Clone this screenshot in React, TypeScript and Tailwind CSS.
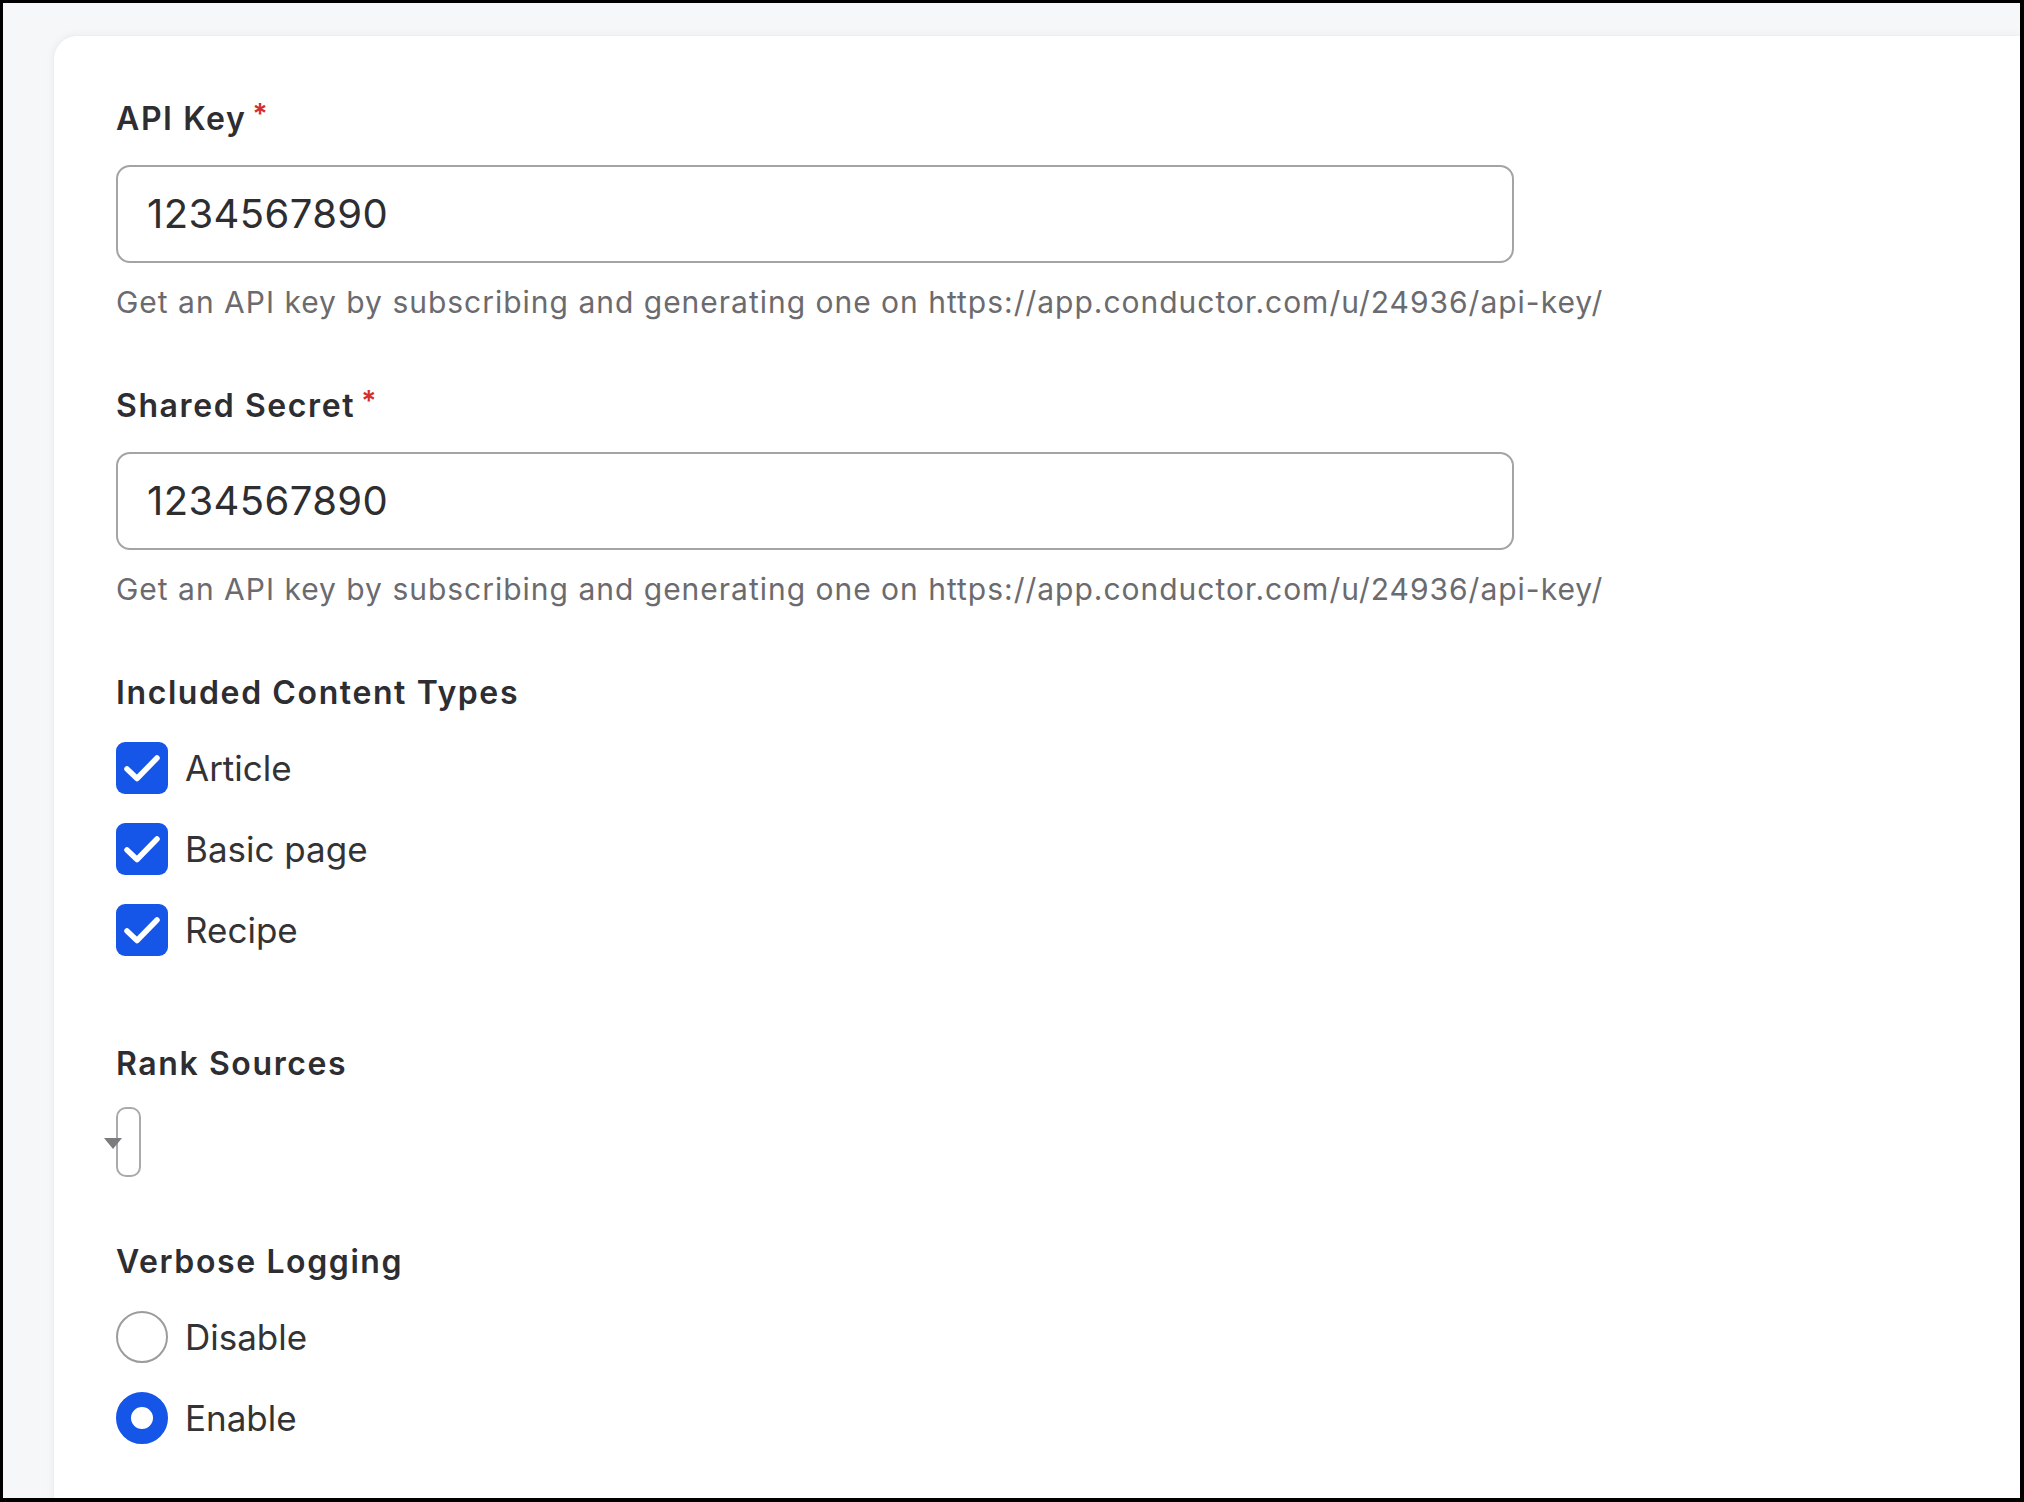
function Label({ text, required }: { text: string; required?: boolean }) {
  return (
    <div className="flex h-[40px] items-center text-[32px] leading-[40px] font-semibold tracking-[0.05em] text-[#2d2d32]">
      <span>{text}</span>
      {required && (
        <span className="-mt-[10px] ml-[6px] text-[28px] leading-[28px] text-[#d3302c]">*</span>
      )}
    </div>
  )
}

function KeyField({ label }: { label: string }) {
  return (
    <div>
      <Label text={label} required />
      <div className="mt-[26px] flex h-[98px] w-[1398px] items-center rounded-[14px] border-2 border-[#a4a4a6] pl-[29px] text-[40px] tracking-[0.01em] text-[#2e2e30]">
        1234567890
      </div>
      <div className="mt-[21px] h-[36px] text-[30px] leading-[36px] tracking-[0.033em] text-[#6b6b6f]">
        Get an API key by subscribing and generating one on https://app.conductor.com/u/24936/api-key/
      </div>
    </div>
  )
}

function Checkbox({ label }: { label: string }) {
  return (
    <div className="flex h-[52px] items-center gap-[17px]">
      <div className="flex h-[52px] w-[52px] items-center justify-center rounded-[9px] bg-[#1556e8]">
        <svg width="52" height="52" viewBox="0 0 52 52" fill="none">
          <path d="M11 27l10 9.5L41 16" stroke="white" strokeWidth="5.5" strokeLinecap="round" strokeLinejoin="round" />
        </svg>
      </div>
      <span className="text-[35px] text-[#333336]">{label}</span>
    </div>
  )
}

function Radio({ label, checked }: { label: string; checked?: boolean }) {
  return (
    <div className="flex h-[52px] items-center gap-[17px]">
      {checked ? (
        <div className="h-[52px] w-[52px] rounded-full border-[15px] border-[#1556e8] bg-white" />
      ) : (
        <div className="h-[52px] w-[52px] rounded-full border-2 border-[#9c9c9e] bg-white" />
      )}
      <span className="text-[35px] text-[#333336]">{label}</span>
    </div>
  )
}

export default function App() {
  return (
    <div className="h-[1502px] w-[2024px] overflow-hidden border-t-[3px] border-r-[4px] border-b-[4px] border-l-[3px] border-black bg-[#f6f7f9] font-[Inter,sans-serif]">
      <div className="mt-[32px] ml-[50px] min-h-[1500px] rounded-tl-[24px] border-t border-l border-[#eceef2] bg-white pt-[63px] pl-[62px] shadow-[0_0_8px_rgba(0,0,0,0.05)]">
        <KeyField label="API Key" />
        <div className="mt-[66px]">
          <KeyField label="Shared Secret" />
        </div>

        <div className="mt-[66px]">
          <Label text="Included Content Types" />
          <div className="mt-[29px] flex flex-col gap-[29px]">
            <Checkbox label="Article" />
            <Checkbox label="Basic page" />
            <Checkbox label="Recipe" />
          </div>
        </div>

        <div className="mt-[88px]">
          <Label text="Rank Sources" />
          {/* tabledrag handle */}
          <div className="relative mt-[23px] h-[70px] w-[25px] rounded-[10px] border-2 border-[#aaaaac]">
            <div className="absolute top-[29px] -left-[14px] h-0 w-0 border-t-[11px] border-r-[9px] border-l-[9px] border-t-[#7c7c7e] border-r-transparent border-l-transparent" />
          </div>
        </div>

        <div className="mt-[65px]">
          <Label text="Verbose Logging" />
          <div className="mt-[29px] flex flex-col gap-[29px]">
            <Radio label="Disable" />
            <Radio label="Enable" checked />
          </div>
        </div>
      </div>
    </div>
  )
}
